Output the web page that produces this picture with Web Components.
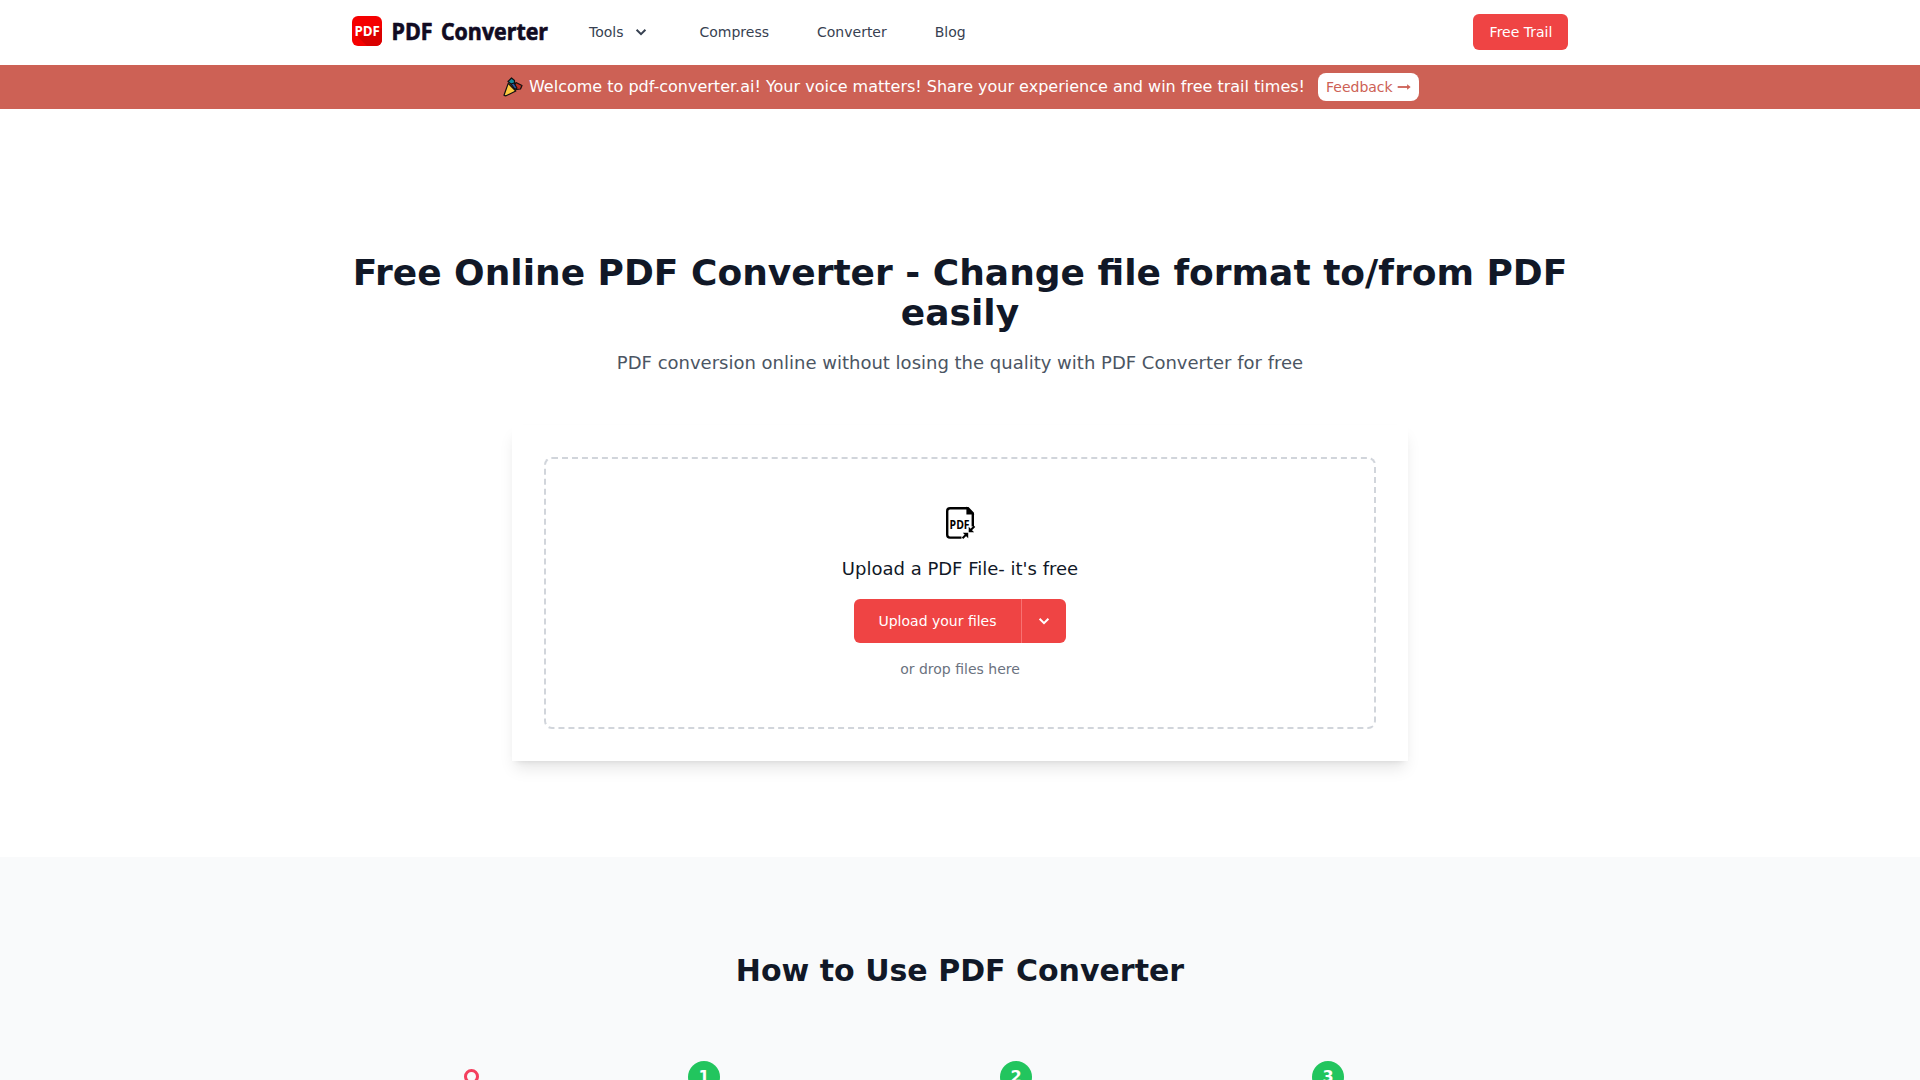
<!DOCTYPE html>
<html lang="en">
<head>
<meta charset="utf-8">
<title>PDF Converter</title>
<style>
html,body{margin:0;height:100%;overflow:hidden;background:#fff}
body{font-family:"DejaVu Sans",sans-serif;color:#111827}
</style>
</head>
<body>
<pdf-app></pdf-app>
<script>
const define = (name, css, html) => customElements.define(name, class extends HTMLElement {
  constructor() {
    super();
    this.attachShadow({mode: 'open'}).innerHTML = `<style>*{box-sizing:border-box}${css}</style>${html}`;
  }
});

define('chevron-icon', `:host{display:block;width:20px;height:20px}svg{display:block}`,
`<svg width="20" height="20" viewBox="0 0 20 20" fill="none" stroke="currentColor" stroke-width="2"><path d="M5.6 7.7 10 12.1l4.4-4.4"/></svg>`);

define('brand-logo', `:host{display:block;width:197px;height:34px}svg{display:block}`,
`<svg width="197" height="34" viewBox="0 0 197 34">
<rect x="0" y="1" width="30" height="30" rx="6" fill="#f50000"/>
<path d="M6 22 15 31h9a6 6 0 006-6V13z" fill="#d90000"/>
<text x="2.4" y="20.8" font-family="Open Sans, sans-serif" font-weight="700" font-size="15" fill="#fff" textLength="25.5" lengthAdjust="spacingAndGlyphs">PDF</text>
<g font-family="Open Sans, sans-serif" font-weight="700" font-size="24" fill="#110b22" stroke="#110b22" stroke-width=".7" stroke-linejoin="round"><text x="39.5" y="24.7" textLength="41" lengthAdjust="spacingAndGlyphs">PDF</text>
<text x="89" y="24.7" textLength="107" lengthAdjust="spacingAndGlyphs">Converter</text></g></svg>`);

define('nav-item', `:host{display:flex;align-items:center;gap:7px;font-size:14px;line-height:20px;color:#374151}
::slotted(chevron-icon){margin-right:1px}`, `<slot></slot>`);

define('site-header', `:host{display:block;height:65px;background:#fff}
.in{width:1216px;height:64px;margin:0 auto;display:flex;align-items:center}
nav{display:flex;gap:48px;margin-left:40px;flex:1}
button{font:14px/20px "DejaVu Sans",sans-serif;color:#fff;background:#ef4444;border:0;border-radius:6px;padding:8px 15px 8px 16px;height:36px;width:95px;white-space:nowrap}`,
`<div class="in"><brand-logo></brand-logo><nav><nav-item>Tools<chevron-icon></chevron-icon></nav-item><nav-item>Compress</nav-item><nav-item>Converter</nav-item><nav-item>Blog</nav-item></nav><button>Free Trail</button></div>`);

define('promo-banner', `:host{display:flex;justify-content:center;align-items:center;height:44px;padding-left:2px;box-sizing:border-box;background:#cd6155;color:#fff;font-size:16px;line-height:24px}
svg{display:block}.party{margin-right:6px}
a{display:flex;align-items:center;gap:4px;margin-left:13px;width:101px;height:28px;padding:0 8px;background:#fff;color:#cd6155;border-radius:8px;font-size:14px}`,
`<svg class="party" width="20" height="20" viewBox="0 0 20 20" stroke="#111" stroke-width="1.2" stroke-linejoin="round">
<path d="M5 4.5 8.5 1l3 2.5V7L9 8z" fill="#128ba0"/><path d="M11 9l2-3.5 6 3-1.5 3.5-4 .5z" fill="#b82e22"/><path d="M8 7l3-1 3 5-2 1.5z" fill="#2459a0"/>
<path d="M1 18.3 5.2 6.4 12.8 14 3 18.8z" fill="#fcc93f"/></svg>
<span>Welcome to pdf-converter.ai! Your voice matters! Share your experience and win free trail times!</span>
<a><span>Feedback</span><svg width="15" height="10" viewBox="0 0 15 10"><path d="M.7 5H12" stroke="currentColor" stroke-width="1.9" fill="none"/><path d="M10.6 2 14.3 5l-3.7 3z" fill="currentColor"/></svg></a>`);

define('upload-button', `:host{display:flex;width:212px;height:44px;border-radius:6px;overflow:hidden;background:#ef4444;color:#fff;font-size:14px;line-height:20px}
.main{width:167px;display:flex;align-items:center;justify-content:center}
.more{flex:1;display:flex;align-items:center;justify-content:center;border-left:1px solid #f87171}`,
`<div class="main"><slot></slot></div><div class="more"><chevron-icon></chevron-icon></div>`);

define('pdf-file-icon', `:host{display:block;width:40px;height:40px}svg{display:block}`,
`<svg width="40" height="40" viewBox="0 0 40 40" fill="none" stroke="#000" stroke-width="2.4">
<path d="M21.5 34.6H10a2.8 2.8 0 01-2.8-2.8V8A2.8 2.8 0 0110 5.2h18l4.8 5V23.5"/><path d="M27 5V11h6z" fill="#000" stroke-width="1.2"/>
<text x="9.6" y="26" font-family="Open Sans, sans-serif" font-weight="700" font-size="12" fill="#000" stroke="none" textLength="20" lengthAdjust="spacingAndGlyphs">PDF</text>
<path d="M34.5 23.2 30.5 27.2M22.5 35.2 26.5 31.2" stroke-width="2"/><path d="M28.7 23.8v5.4h5.4zM22.8 29.8h5.4v5.4z" fill="#000" stroke="none"/></svg>`);

define('upload-card', `:host{display:block;width:896px;height:336px;padding:32px;box-sizing:border-box;background:#fff;box-shadow:0 10px 15px -3px rgba(0,0,0,.1),0 4px 6px -4px rgba(0,0,0,.1)}
.drop{height:272px;border:2px dashed #d1d5db;border-radius:8px;display:flex;flex-direction:column;align-items:center;padding-top:44px}
.title{margin:12px 0 16px;font-size:18px;line-height:28px}
.hint{margin-top:16px;font-size:14px;line-height:20px;color:#6b7280}`,
`<div class="drop"><pdf-file-icon></pdf-file-icon><div class="title">Upload a PDF File- it's free</div><upload-button>Upload your files</upload-button><div class="hint">or drop files here</div></div>`);

define('hero-section', `:host{display:flex;flex-direction:column;align-items:center;height:748px;padding-top:144px;box-sizing:border-box}
h1{width:1216px;margin:0;font-size:36px;line-height:40px;font-weight:700;text-align:center}
p{margin:16px 0 48px;font-size:18px;line-height:28px;color:#4b5563}`,
`<h1>Free Online PDF Converter - Change file format to/from PDF easily</h1><p>PDF conversion online without losing the quality with PDF Converter for free</p><upload-card></upload-card>`);

define('step-badge', `:host{display:flex;align-items:center;justify-content:center;width:32px;height:32px;border-radius:50%;background:#22c55e;color:#fff;font-size:16px;line-height:24px;font-weight:700}`, `<slot></slot>`);

define('how-section', `:host{display:block;height:223px;overflow:hidden;background:#f9fafb}
h2{margin:0;padding-top:96px;font-size:30px;line-height:36px;font-weight:700;text-align:center}
.steps{display:flex;margin:72px 0 0 464px}
.ring{width:15px;height:15px;margin:8px 209px 0 0;border:3px solid #f43f5e;border-radius:50%}
step-badge{margin-right:280px}`,
`<h2>How to Use PDF Converter</h2><div class="steps"><div class="ring"></div><step-badge>1</step-badge><step-badge>2</step-badge><step-badge>3</step-badge></div>`);

define('pdf-app', `:host{display:block;width:1920px;height:1080px;overflow:hidden}`,
`<site-header></site-header><promo-banner></promo-banner><hero-section></hero-section><how-section></how-section>`);
</script>
</body>
</html>
